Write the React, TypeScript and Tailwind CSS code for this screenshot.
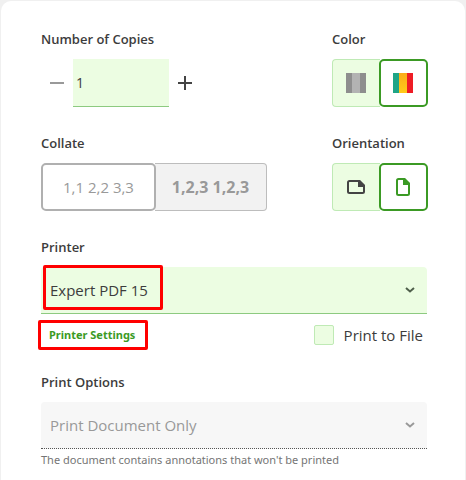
import { clsx } from "clsx"
import type { ReactNode } from "react"

const labelClass = "block text-[13px] leading-5 font-semibold text-[#3c3c3c]"

function Toggle({
  active,
  label,
  children,
}: {
  active?: boolean
  label: string
  children: ReactNode
}) {
  return (
    <button
      type="button"
      aria-label={label}
      aria-pressed={!!active}
      className={clsx(
        "flex h-12 items-center justify-center pr-0.5",
        active
          ? "z-10 -ml-px w-[49px] rounded-[5px] border-2 border-[#3b9a24] bg-white text-[#3b9a24]"
          : "w-12 rounded-l-[4px] border border-r-0 border-[#bfeab5] bg-[#ecfde2] text-[#444444]"
      )}
    >
      {children}
    </button>
  )
}

function Chevron({ className }: { className: string }) {
  return (
    <svg
      viewBox="0 0 10 6"
      className={clsx("pointer-events-none absolute top-5 right-3 h-[6px] w-[10px]", className)}
      fill="none"
      stroke="currentColor"
      strokeWidth="2"
    >
      <path d="M1 1l4 3.500 4-3.500" />
    </svg>
  )
}

function FileIcon() {
  return (
    <svg viewBox="0 0 14 18" className="h-[18px] w-[14px]">
      <path
        d="M2.500 1H8l5 5v9.500a1.500 1.500 0 0 1-1.500 1.500h-9A1.500 1.500 0 0 1 1 15.500v-13A1.500 1.500 0 0 1 2.500 1z"
        fill="none"
        stroke="currentColor"
        strokeWidth="2"
      />
      <path d="M7 0h2l5 5v2H7z" fill="currentColor" />
    </svg>
  )
}

function FileLandscapeIcon() {
  return (
    <svg viewBox="0 0 18 14" className="h-[14px] w-[18px]">
      <path
        d="M2.500 1H12l5 5v5.500a1.500 1.500 0 0 1-1.500 1.500h-13A1.500 1.500 0 0 1 1 11.500v-9A1.500 1.500 0 0 1 2.500 1z"
        fill="none"
        stroke="currentColor"
        strokeWidth="2"
      />
      <path d="M11 0h2l5 5v2h-7z" fill="currentColor" />
    </svg>
  )
}

export default function App() {
  return (
    <main className="flex min-h-screen bg-[#f0f0f0] px-px pt-px font-['Open_Sans','Noto_Sans',sans-serif]">
      <form className="flex-1 rounded-t-[10px] bg-white pt-7 pr-[37px] pl-10">
        <div className="flex justify-between">
          <div>
            <label htmlFor="copies" className={labelClass}>
              Number of Copies
            </label>
            <div className="mt-2.5 flex h-12">
              <button
                type="button"
                aria-label="Fewer copies"
                className="flex w-8 items-center justify-center text-[#999999]"
              >
                <svg viewBox="0 0 14 14" className="size-[14px]">
                  <path d="M0 6h14v2H0z" fill="currentColor" />
                </svg>
              </button>
              <input
                id="copies"
                type="text"
                inputMode="numeric"
                defaultValue="1"
                className="w-24 border-b border-[#8dca80] bg-[#ecfde2] px-[3px] text-sm text-[#3c3c3c] outline-none"
              />
              <button
                type="button"
                aria-label="More copies"
                className="flex w-8 items-center justify-center text-[#444444]"
              >
                <svg viewBox="0 0 14 14" className="size-[14px]">
                  <path d="M0 6h6V0h2v6h6v2H8v6H6V8H0z" fill="currentColor" />
                </svg>
              </button>
            </div>
          </div>

          <div role="group" aria-label="Color">
            <span className={labelClass}>Color</span>
            <div className="mt-2.5 flex">
              <Toggle label="Grayscale">
                <svg viewBox="0 0 20 20" className="size-5">
                  <path d="M0 0h6v20H0z" fill="#8e8e8e" />
                  <path d="M6 0h8v20H6z" fill="#b3b3b3" />
                  <path d="M14 0h6v20h-6z" fill="#8e8e8e" />
                </svg>
              </Toggle>
              <Toggle label="Color" active>
                <svg viewBox="0 0 20 20" className="size-5">
                  <defs>
                    <linearGradient id="amber" x1="0" y1="0" x2="0" y2="1">
                      <stop offset="0" stopColor="#fbab18" />
                      <stop offset="1" stopColor="#ffcb1a" />
                    </linearGradient>
                  </defs>
                  <path d="M0 0h6v20H0z" fill="#1fa587" />
                  <path d="M6 0h8v20H6z" fill="url(#amber)" />
                  <path d="M14 0h6v20h-6z" fill="#ee1c25" />
                </svg>
              </Toggle>
            </div>
          </div>
        </div>

        <div className="mt-[26px] flex justify-between">
          <div role="group" aria-label="Collate">
            <span className={labelClass}>Collate</span>
            <div className="mt-2.5 flex h-12 text-[#999999]">
              <button
                type="button"
                disabled
                className="z-10 w-[115px] rounded-[5px] border-2 border-[#b0b0b0] bg-white text-[15px]"
              >
                1,1 2,2 3,3
              </button>
              <button
                type="button"
                disabled
                className="-ml-px w-28 rounded-r-[4px] border border-l-0 border-[#bdbdbd] bg-[#f2f2f2] text-base font-bold"
              >
                1,2,3 1,2,3
              </button>
            </div>
          </div>

          <div role="group" aria-label="Orientation">
            <span className={labelClass}>Orientation</span>
            <div className="mt-2.5 flex">
              <Toggle label="Landscape">
                <FileLandscapeIcon />
              </Toggle>
              <Toggle label="Portrait" active>
                <FileIcon />
              </Toggle>
            </div>
          </div>
        </div>

        <div className="mt-[26px] mr-px">
          <label htmlFor="printer" className={labelClass}>
            Printer
          </label>
          <div className="relative mt-2.5">
            <select
              id="printer"
              className="block h-[47px] w-full appearance-none rounded-t-[4px] border-b border-[#8dca80] bg-[#ecfde2] px-[9px] text-[15px] text-[#3c3c3c] outline-none"
            >
              <option>Expert PDF 15</option>
            </select>
            <Chevron className="text-[#4f5f4b]" />
            <span className="pointer-events-none absolute -top-0.5 left-0.5 h-[45px] w-[120px] rounded-[2px] border-3 border-[#ff0000]" />
          </div>
        </div>

        <div className="mt-1.5 mr-px flex items-center justify-between">
          <a
            href="#printer"
            className="-ml-[3px] rounded-[2px] border-3 border-[#ff0000] py-0.5 pr-2.5 pl-2 font-['Noto_Sans',sans-serif] text-[11px] leading-5 font-bold text-[#3b9a24]"
          >
            Printer Settings
          </a>
          <label className="flex items-center gap-2.5 pr-1 text-[15px] leading-5 text-[#3c3c3c]">
            <input
              type="checkbox"
              className="size-5 appearance-none rounded-[2px] border border-[#bfeab5] bg-[#ecfde2]"
            />
            Print to File
          </label>
        </div>

        <div className="mt-[22px] mr-px">
          <label htmlFor="options" className={labelClass}>
            Print Options
          </label>
          <div className="relative mt-2.5">
            <select
              id="options"
              disabled
              aria-describedby="options-note"
              className="block h-[47px] w-full appearance-none rounded-t-[4px] border-b border-dotted border-[#555555] bg-[#f7f7f7] px-[9px] text-[15px] text-[#999999] opacity-100"
            >
              <option>Print Document Only</option>
            </select>
            <Chevron className="text-[#999999]" />
          </div>
          <p
            id="options-note"
            className="mt-px font-['Noto_Sans',sans-serif] text-[11px] leading-5 text-[#757575]"
          >
            The document contains annotations that won't be printed
          </p>
        </div>
      </form>
    </main>
  )
}
